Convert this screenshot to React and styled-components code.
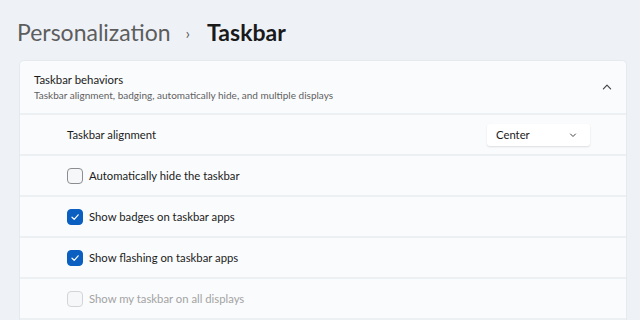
import React from 'react';
import styled, { createGlobalStyle } from 'styled-components';

const Global = createGlobalStyle`
  body {
    margin: 0;
    background: #eef2f7;
    font-family: Lato, "Noto Sans", sans-serif;
    color: #1b1b1b;
  }
`;

const Page = styled.div`
  width: 640px;
  height: 320px;
  box-sizing: border-box;
  padding: 17px 13px 0 19px;
  overflow: hidden;
`;

const Breadcrumb = styled.div`
  display: flex;
  align-items: center;
  height: 30px;
  margin-left: -2px;
  font-size: 23px;
`;

const Crumb = styled.span`
  color: ${p => (p.current ? '#1a1a1a' : '#5d5d5d')};
  font-weight: ${p => (p.current ? 700 : 400)};
`;

const Sep = styled.span`
  margin: 0 17px 0 15px;
  font-size: 16px;
  color: #5d5d5d;
`;

const Card = styled.div`
  margin-top: 13px;
  background: #fafbfd;
  border-radius: 5px 5px 0 0;
  border: 1px solid #e6e9ee;
  border-bottom: none;
`;

const Header = styled.div`
  height: 52px;
  display: flex;
  align-items: center;
  padding: 0 13px 0 14px;
  border-bottom: 2px solid #edf0f3;
`;

const HeaderText = styled.div`
  flex: 1;
  display: flex;
  flex-direction: column;
  gap: 1px;
`;

const HeaderTitle = styled.div`
  font-size: 11.4px;
  line-height: 16px;
  color: #1b1b1b;
`;

const HeaderSub = styled.div`
  font-size: 10px;
  line-height: 13px;
  color: #5f5f5f;
`;

const Row = styled.div`
  height: 39px;
  display: flex;
  align-items: center;
  padding: 0 36px 0 47px;
  border-bottom: 2px solid #edf0f3;
`;

const Label = styled.span`
  flex: 1;
  font-size: 11.3px;
  color: ${p => (p.disabled ? '#a3a3a3' : '#1b1b1b')};
`;

const Box = styled.span`
  width: 16px;
  height: 16px;
  box-sizing: border-box;
  border-radius: 4px;
  margin-right: 6px;
  display: flex;
  align-items: center;
  justify-content: center;
  background: ${p => (p.checked ? '#0a5fc0' : '#f6f7f9')};
  border: 1px solid
    ${p => (p.checked ? '#0a5fc0' : p.disabled ? '#d2d4d7' : '#8b8d90')};
`;

const Select = styled.div`
  width: 103px;
  height: 22px;
  box-sizing: border-box;
  display: flex;
  align-items: center;
  padding: 0 12px 0 9px;
  background: #ffffff;
  border-radius: 3px;
  box-shadow: 0 1px 2px rgba(0, 0, 0, 0.12);
  font-size: 11.3px;
  color: #1b1b1b;
`;

const SelectText = styled.span`
  flex: 1;
`;

const Chevron = ({ up, size = 10 }) => (
  <svg width={size} height={size} viewBox="0 0 10 10" fill="none">
    <path
      d={up ? 'M2 6.5 L5 3.5 L8 6.5' : 'M2.5 4 L5 6.5 L7.5 4'}
      stroke="#444"
      strokeWidth="1"
      strokeLinecap="round"
      strokeLinejoin="round"
    />
  </svg>
);

const Check = () => (
  <svg width="10" height="10" viewBox="0 0 10 10" fill="none">
    <path d="M2 5.2 L4.2 7.3 L8.2 2.8" stroke="#fff" strokeWidth="1.2" strokeLinecap="round" strokeLinejoin="round" />
  </svg>
);

const options = [
  { label: 'Automatically hide the taskbar', checked: false },
  { label: 'Show badges on taskbar apps', checked: true },
  { label: 'Show flashing on taskbar apps', checked: true },
  { label: 'Show my taskbar on all displays', checked: false, disabled: true },
];

export default function App() {
  return (
    <Page>
      <Global />
      <Breadcrumb>
        <Crumb>Personalization</Crumb>
        <Sep>›</Sep>
        <Crumb current>Taskbar</Crumb>
      </Breadcrumb>
      <Card>
        <Header>
          <HeaderText>
            <HeaderTitle>Taskbar behaviors</HeaderTitle>
            <HeaderSub>Taskbar alignment, badging, automatically hide, and multiple displays</HeaderSub>
          </HeaderText>
          <Chevron up size={12} />
        </Header>
        <Row>
          <Label>Taskbar alignment</Label>
          <Select>
            <SelectText>Center</SelectText>
            <Chevron />
          </Select>
        </Row>
        {options.map(o => (
          <Row key={o.label}>
            <Box checked={o.checked} disabled={o.disabled}>
              {o.checked && <Check />}
            </Box>
            <Label disabled={o.disabled}>{o.label}</Label>
          </Row>
        ))}
      </Card>
    </Page>
  );
}
